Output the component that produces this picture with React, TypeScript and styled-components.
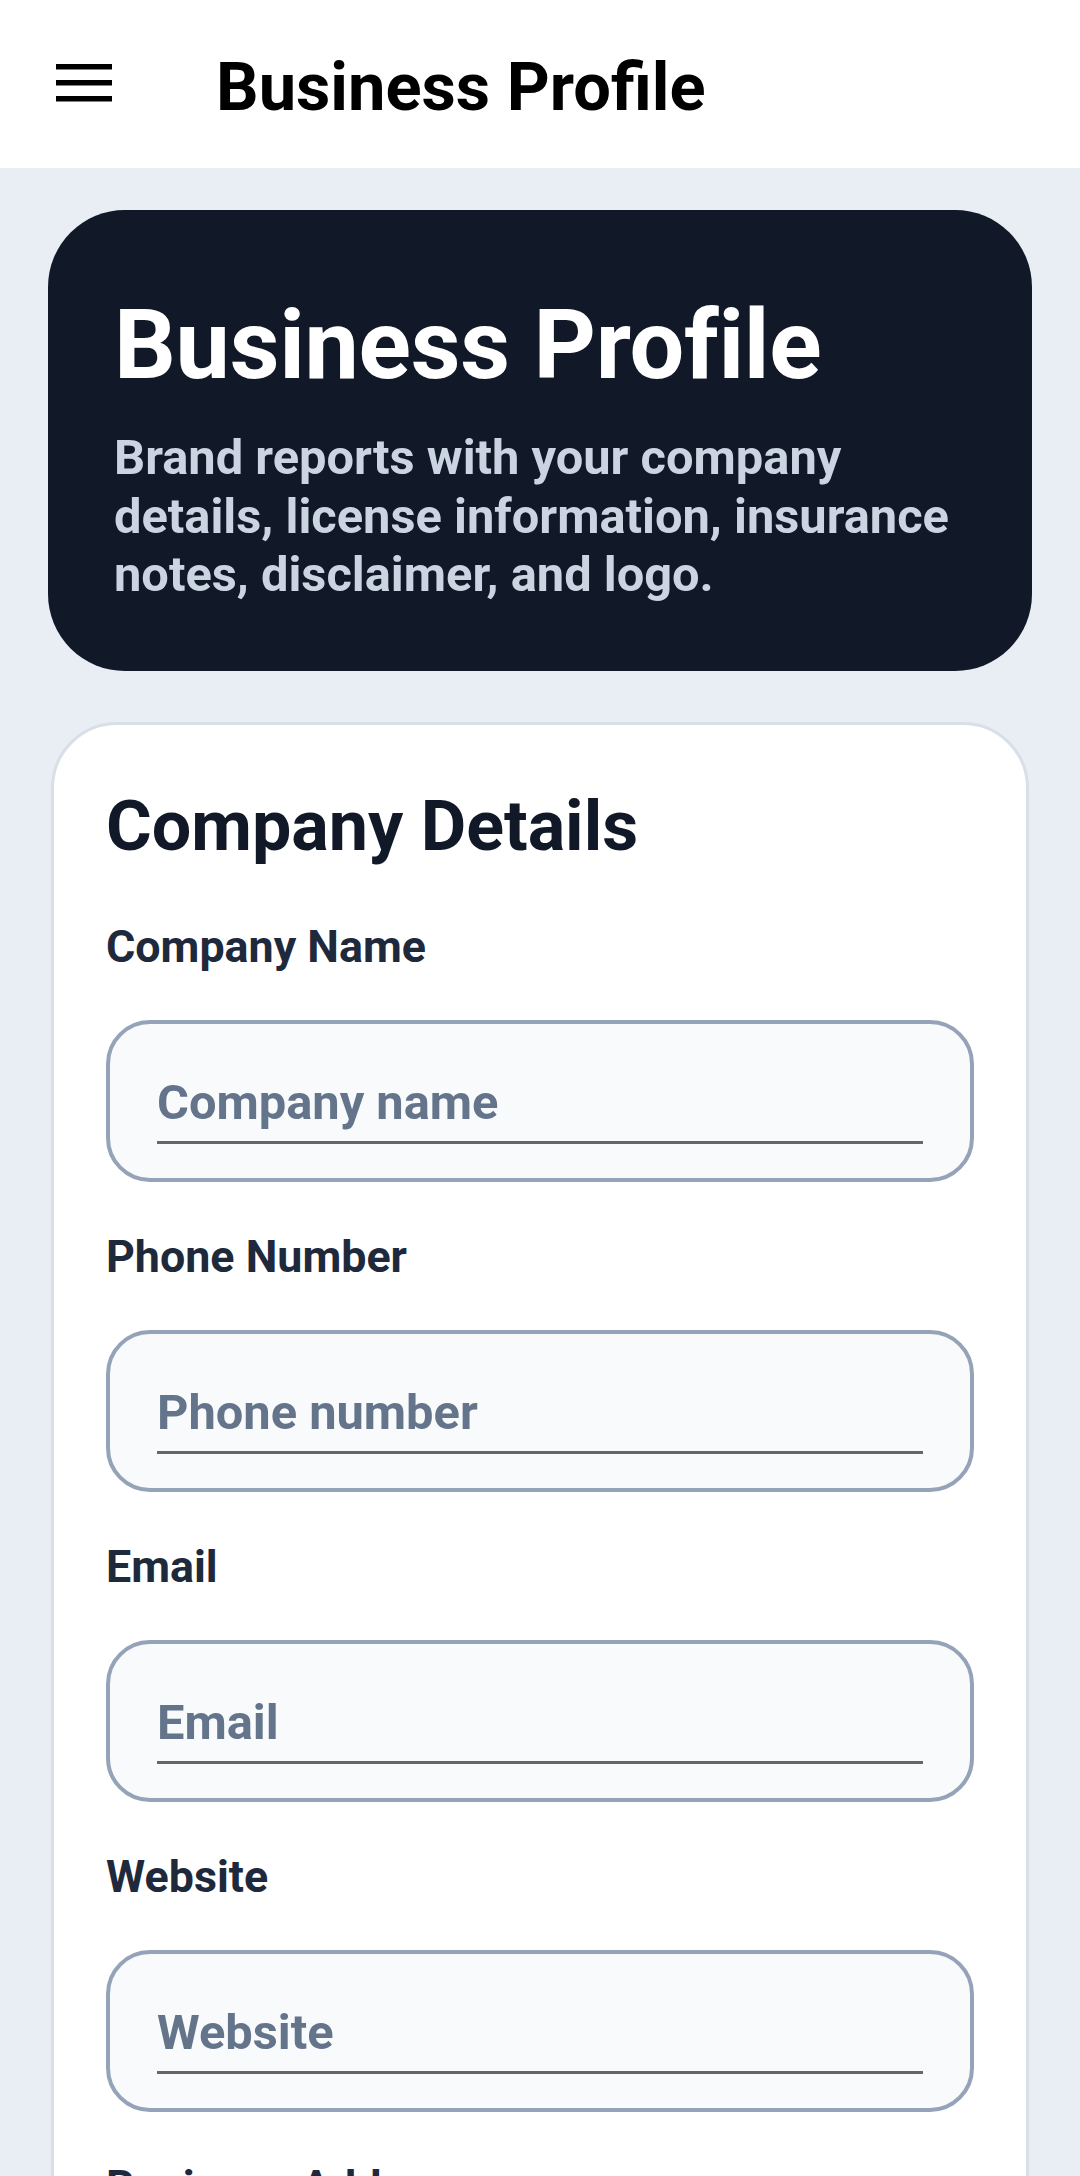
import React from "react";
import styled, { createGlobalStyle } from "styled-components";

const GlobalStyle = createGlobalStyle`
  html, body {
    margin: 0;
    padding: 0;
    background: #e9eef5;
    font-family: Roboto, "Noto Sans", "Liberation Sans", sans-serif;
  }
  * { box-sizing: border-box; }
`;

const Header = styled.header`
  height: 168px;
  background: #ffffff;
  display: flex;
  align-items: center;
  padding: 5px 0 0 56px;
`;

const MenuButton = styled.button`
  width: 56px;
  height: 38px;
  padding: 0;
  margin: 0 0 7px 0;
  border: none;
  background: transparent;
  display: flex;
  cursor: pointer;
`;

const HeaderTitle = styled.h1`
  margin: 0 0 0 104px;
  font-size: 66.8px;
  font-weight: 700;
  color: #000000;
  line-height: normal;
`;

const Main = styled.main`
  display: flex;
  flex-direction: column;
  padding: 42px 48px 60px;
`;

const Hero = styled.section`
  background: #111827;
  border-radius: 77px;
  padding: 78px 66px 66px;
`;

const HeroTitle = styled.h2`
  margin: 0 0 27px;
  font-size: 97px;
  font-weight: 700;
  letter-spacing: -0.3px;
  line-height: normal;
  color: #ffffff;
`;

const HeroText = styled.p`
  margin: 0;
  font-size: 48.8px;
  font-weight: 700;
  line-height: 58.5px;
  color: #cbd5e1;
`;

const Card = styled.section`
  margin: 51px 3px 0;
  background: #ffffff;
  border: 3px solid #d8dfe8;
  border-radius: 66px;
  padding: 60px 52px 52px;
`;

const CardTitle = styled.h3`
  margin: 0 0 51px;
  font-size: 70px;
  font-weight: 700;
  line-height: normal;
  color: #111827;
`;

const Fields = styled.div`
  display: flex;
  flex-direction: column;
  gap: 46px;
`;

const Field = styled.label`
  display: flex;
  flex-direction: column;
`;

const FieldLabel = styled.span`
  font-size: 44.8px;
  font-weight: 700;
  line-height: 57px;
  color: #1e293b;
  margin-bottom: 45px;
`;

const InputShell = styled.div`
  border: 4px solid #94a3b8;
  border-radius: 44px;
  background: #f8fafc;
  padding: 50px 47px 34px;
`;

const TextInput = styled.input`
  display: block;
  width: 100%;
  height: 70px;
  padding: 0 0 9px;
  margin: 0;
  border: none;
  border-bottom: 3px solid #666666;
  background: transparent;
  font-family: inherit;
  font-size: 48.8px;
  font-weight: 700;
  color: #0f172a;
  outline: none;
  &::placeholder {
    color: #64748b;
    opacity: 1;
  }
`;

const fields = [
  { label: "Company Name", placeholder: "Company name" },
  { label: "Phone Number", placeholder: "Phone number" },
  { label: "Email", placeholder: "Email" },
  { label: "Website", placeholder: "Website" },
  { label: "Business Address", placeholder: "Business address" },
  { label: "License Number", placeholder: "License number" },
];

function MenuIcon() {
  return (
    <svg width="56" height="38" viewBox="0 0 56 38" aria-hidden="true">
      <rect x="0" y="0" width="56" height="5.5" fill="#000" />
      <rect x="0" y="16" width="56" height="5.5" fill="#000" />
      <rect x="0" y="32" width="56" height="5.5" fill="#000" />
    </svg>
  );
}

export default function App() {
  return (
    <>
      <GlobalStyle />
      <Header>
        <MenuButton aria-label="Open menu">
          <MenuIcon />
        </MenuButton>
        <HeaderTitle>Business Profile</HeaderTitle>
      </Header>
      <Main>
        <Hero>
          <HeroTitle>Business Profile</HeroTitle>
          <HeroText>
            Brand reports with your company details, license information,
            insurance notes, disclaimer, and logo.
          </HeroText>
        </Hero>
        <Card>
          <CardTitle>Company Details</CardTitle>
          <Fields>
            {fields.map((f) => (
              <Field key={f.label}>
                <FieldLabel>{f.label}</FieldLabel>
                <InputShell>
                  <TextInput placeholder={f.placeholder} />
                </InputShell>
              </Field>
            ))}
          </Fields>
        </Card>
      </Main>
    </>
  );
}
